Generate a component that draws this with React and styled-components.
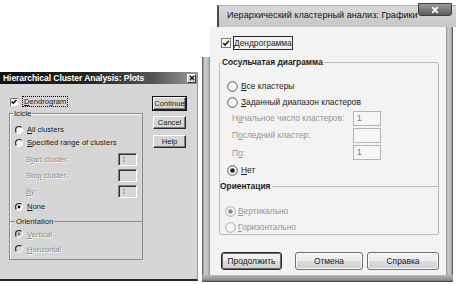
import React from "react";
import styled, { createGlobalStyle } from "styled-components";

const GlobalStyle = createGlobalStyle`
  html, body { margin: 0; padding: 0; background: #fff; }
  body { width: 456px; height: 284px; overflow: hidden; }
  * { box-sizing: border-box; }
`;

const Desktop = styled.div`
  display: flex;
  align-items: flex-start;
  width: 456px;
  height: 284px;
`;

// underline the accelerator letter
function Accel({ text, at = 0 }) {
  return (
    <span>
      {text.slice(0, at)}
      <u>{text[at]}</u>
      {text.slice(at + 1)}
    </span>
  );
}

/* ---------------- classic dialog (left) ---------------- */

const Win2kWindow = styled.div`
  margin-top: 72px;
  width: 198px;
  height: 209px;
  display: flex;
  flex-direction: column;
  background: #d6d6d6;
  border-bottom: 2px solid #262626;
  border-right: 1px solid #9a9a9a;
  font-family: "Liberation Sans", Arial, sans-serif;
  font-size: 7.6px;
  color: #1a1a1a;
`;

const Win2kTitle = styled.div`
  height: 12px;
  display: flex;
  align-items: center;
  padding: 0 1px 0 3px;
  background: linear-gradient(90deg, #0e0e0e 0%, #242424 45%, #555 78%, #9c9c9c 100%);
  color: #fff;
  font-weight: bold;
  font-size: 8.6px;
  letter-spacing: -0.1px;
`;

const Win2kTitleText = styled.div`
  flex: 1;
  white-space: nowrap;
`;

const Win2kClose = styled.div`
  width: 9px;
  height: 9px;
  display: flex;
  align-items: center;
  justify-content: center;
  background: #d6d6d6;
  border-top: 1px solid #fff;
  border-left: 1px solid #fff;
  border-right: 1px solid #303030;
  border-bottom: 1px solid #303030;
`;

const Win2kBody = styled.div`
  flex: 1;
  display: flex;
  padding: 11px 0 0 9px;
`;

const Win2kMain = styled.div`
  width: 134px;
  display: flex;
  flex-direction: column;
`;

const Win2kCheckRow = styled.div`
  height: 13px;
  display: flex;
  align-items: center;
  padding-left: 1px;
  gap: 4px;
`;

const Win2kFocus = styled.span`
  border: 1px dotted #000;
  padding: 0 1px;
  line-height: 9px;
`;

const Win2kGroup = styled.fieldset`
  margin: 1px 0 0 0;
  padding: 0 0 3px 0;
  min-width: 0;
  border: 1px solid #8a8a8a;
  box-shadow: inset 1px 1px 0 #fbfbfb;
  display: flex;
  flex-direction: column;
`;

const Win2kLegend = styled.legend`
  margin-left: 3px;
  padding: 0 1px;
  line-height: 9px;
  background: #d6d6d6;
`;

const Win2kOption = styled.div`
  height: 13px;
  margin-top: ${(p) => p.$top || 0}px;
  display: flex;
  align-items: center;
  gap: 4px;
  padding-left: 5px;
  color: ${(p) => (p.$disabled ? "#8d8d8d" : "#1a1a1a")};
  text-shadow: ${(p) => (p.$disabled ? "1px 1px 0 #fafafa" : "none")};
`;

const Win2kField = styled.div`
  height: 16px;
  margin-top: ${(p) => p.$top || 0}px;
  display: flex;
  align-items: center;
  padding-left: 16px;
  padding-right: 5px;
  color: #8d8d8d;
  text-shadow: 1px 1px 0 #fafafa;
`;

const Win2kInput = styled.div`
  margin-left: auto;
  width: 19px;
  height: 13px;
  padding-left: 3px;
  line-height: 11px;
  background: #d6d6d6;
  border-top: 1px solid #7a7a7a;
  border-left: 1px solid #7a7a7a;
  border-right: 1px solid #fff;
  border-bottom: 1px solid #fff;
  box-shadow: inset 1px 1px 0 #303030;
  color: #8d8d8d;
`;

const Win2kSeparator = styled.div`
  height: 12px;
  margin-top: 2px;
  display: flex;
  align-items: center;
  &::before {
    content: "";
    width: 5px;
    height: 1px;
    background: #8a8a8a;
    margin-right: 1px;
  }
  &::after {
    content: "";
    flex: 1;
    height: 1px;
    background: #8a8a8a;
    margin-left: 1px;
  }
`;

const Win2kButtons = styled.div`
  margin: 2px 0 0 10px;
  display: flex;
  flex-direction: column;
  gap: 6px;
`;

const Win2kButton = styled.div`
  width: 33px;
  height: 13px;
  display: flex;
  align-items: center;
  justify-content: center;
  background: #d6d6d6;
  border-top: 1px solid #fff;
  border-left: 1px solid #fff;
  border-right: 1px solid #2a2a2a;
  border-bottom: 1px solid #2a2a2a;
  box-shadow: ${(p) =>
    p.$default ? "0 0 0 1px #111, inset -1px -1px 0 #7e7e7e" : "inset -1px -1px 0 #7e7e7e"};
`;

function ClassicCheck() {
  return (
    <svg width="8" height="8" viewBox="0 0 8 8">
      <rect x="0" y="0" width="8" height="8" fill="#fff" />
      <path d="M0.5 8 V0.5 H8" fill="none" stroke="#6e6e6e" strokeWidth="1" />
      <path d="M1.6 3.6 L3.2 5.3 L6.5 1.9" fill="none" stroke="#000" strokeWidth="1.4" />
    </svg>
  );
}

function ClassicRadio({ checked, disabled }) {
  return (
    <svg width="8" height="8" viewBox="0 0 8 8">
      <circle cx="4" cy="4" r="3.5" fill={disabled ? "#d6d6d6" : "#f4f4f4"} />
      <path d="M6.5 1.5 A3.5 3.5 0 0 0 1.5 6.5" fill="none" stroke="#333" strokeWidth="1.3" />
      <path d="M1.5 6.5 A3.5 3.5 0 0 0 6.5 1.5" fill="none" stroke="#fff" strokeWidth="1" />
      {checked && <circle cx="4" cy="4" r="1.4" fill={disabled ? "#7a7a7a" : "#000"} />}
    </svg>
  );
}

function CloseX({ size, color, width }) {
  return (
    <svg width={size} height={size} viewBox="0 0 10 10">
      <path d="M1.5 1.5 L8.5 8.5 M8.5 1.5 L1.5 8.5" stroke={color} strokeWidth={width} />
    </svg>
  );
}

function ClassicDialog() {
  return (
    <Win2kWindow>
      <Win2kTitle>
        <Win2kTitleText>Hierarchical Cluster Analysis: Plots</Win2kTitleText>
        <Win2kClose>
          <CloseX size={6} color="#000" width={2} />
        </Win2kClose>
      </Win2kTitle>
      <Win2kBody>
        <Win2kMain>
          <Win2kCheckRow>
            <ClassicCheck />
            <Win2kFocus>
              <Accel text="Dendrogram" />
            </Win2kFocus>
          </Win2kCheckRow>
          <Win2kGroup>
            <Win2kLegend>Icicle</Win2kLegend>
            <Win2kOption $top={5}>
              <ClassicRadio />
              <Accel text="All clusters" />
            </Win2kOption>
            <Win2kOption>
              <ClassicRadio />
              <Accel text="Specified range of clusters" />
            </Win2kOption>
            <Win2kField $top={2}>
              <Accel text="Start cluster:" at={1} />
              <Win2kInput>1</Win2kInput>
            </Win2kField>
            <Win2kField>
              <Accel text="Stop cluster:" at={3} />
              <Win2kInput />
            </Win2kField>
            <Win2kField>
              <Accel text="By:" />
              <Win2kInput>1</Win2kInput>
            </Win2kField>
            <Win2kOption $top={1}>
              <ClassicRadio checked />
              <Accel text="None" />
            </Win2kOption>
            <Win2kSeparator>Orientation</Win2kSeparator>
            <Win2kOption $top={0.5} $disabled>
              <ClassicRadio checked disabled />
              <Accel text="Vertical" />
            </Win2kOption>
            <Win2kOption $top={2} $disabled>
              <ClassicRadio disabled />
              <Accel text="Horizontal" />
            </Win2kOption>
          </Win2kGroup>
        </Win2kMain>
        <Win2kButtons>
          <Win2kButton $default>Continue</Win2kButton>
          <Win2kButton>Cancel</Win2kButton>
          <Win2kButton>Help</Win2kButton>
        </Win2kButtons>
      </Win2kBody>
    </Win2kWindow>
  );
}

/* ---------------- Windows 7 dialog (right) ---------------- */

const AeroWindow = styled.div`
  margin-left: 4px;
  width: 251px;
  height: 282px;
  display: flex;
  flex-direction: column;
  font-family: "Liberation Sans", Arial, sans-serif;
  font-size: 8.4px;
  color: #1c1c1c;
`;

const AeroTitleStrip = styled.div`
  height: 27px;
  display: flex;
  padding: 5px 0 0 15px;
`;

const AeroTitleBar = styled.div`
  flex: 1;
  display: flex;
  align-items: flex-start;
  background: linear-gradient(#dadada, #c6c6c6);
  border-left: 2px solid #4a4a4a;
  border-top: 1px solid #b0b0b0;
`;

const AeroTitleText = styled.div`
  flex: 1;
  padding: 4px 0 0 8px;
  font-size: 9.1px;
  color: #121212;
  white-space: nowrap;
`;

const AeroClose = styled.div`
  width: 34px;
  height: 13px;
  margin: -3px 5px 0 0;
  display: flex;
  align-items: center;
  justify-content: center;
  background: linear-gradient(#9a9a9a, #5c5c5c);
  border: 1px solid #3e3e3e;
  border-radius: 0 0 3px 3px;
`;

const AeroMain = styled.div`
  flex: 1;
  display: flex;
`;

const FrameLeft = styled.div`
  width: 8px;
  margin-top: 30px;
  background: linear-gradient(90deg, #6a6a6a 0, #6a6a6a 1px, #cfcfcf 2px, #bdbdbd 6px, #8c8c8c 8px);
`;

const FrameRight = styled.div`
  width: 7px;
  background: linear-gradient(90deg, #8c8c8c 0, #c9c9c9 2px, #bcbcbc 5px, #4c4c4c 7px);
`;

const FrameBottom = styled.div`
  height: 7px;
  background: linear-gradient(#b8b8b8, #8e8e8e 5px, #3e3e3e 7px);
`;

const AeroContent = styled.div`
  flex: 1;
  display: flex;
  flex-direction: column;
  padding: 9px 7px 0 9px;
  background: #f3f3f3;
`;

const AeroCheckRow = styled.div`
  height: 14px;
  display: flex;
  align-items: center;
  padding-left: 2px;
  gap: 2px;
`;

const AeroFocus = styled.span`
  border: 1px solid #2a2a2a;
  padding: 1px 0;
  line-height: 10px;
`;

const AeroGroup = styled.fieldset`
  margin: 6.5px 0 0 0;
  padding: 0;
  min-width: 0;
  border: 1px solid #bcbcbc;
  border-radius: 2px;
  display: flex;
  flex-direction: column;
`;

const AeroLegend = styled.legend`
  margin-left: 1px;
  padding: 0 1px;
  line-height: 11px;
  font-weight: bold;
`;

const AeroOption = styled.div`
  height: 14px;
  margin-top: ${(p) => p.$top || 0}px;
  display: flex;
  align-items: center;
  gap: ${(p) => p.$gap ?? 3}px;
  padding-left: ${(p) => p.$indent ?? 7}px;
  color: ${(p) => (p.$disabled ? "#959595" : "#1c1c1c")};
`;

const AeroField = styled.div`
  height: 16px;
  margin-top: ${(p) => p.$top || 0}px;
  display: flex;
  align-items: center;
  padding-left: 12px;
  padding-right: 57px;
  color: #959595;
`;

const AeroInput = styled.div`
  margin-left: auto;
  width: 28px;
  height: 15px;
  padding-left: 3px;
  line-height: 13px;
  border: 1px solid #b4b4b4;
  background: #f6f6f6;
  color: #777;
`;

const AeroSeparator = styled.div`
  height: 12px;
  margin-top: 3px;
  display: flex;
  align-items: center;
  font-weight: bold;
  &::after {
    content: "";
    flex: 1;
    height: 1px;
    margin-left: 2px;
    background: #bcbcbc;
  }
`;

const AeroButtonRow = styled.div`
  margin-top: 17px;
  padding-left: 2px;
  display: flex;
`;

const AeroButton = styled.div`
  width: ${(p) => p.$width}px;
  height: 18px;
  margin-left: ${(p) => p.$gap || 0}px;
  display: flex;
  align-items: center;
  justify-content: center;
  border: 1px solid ${(p) => (p.$default ? "#262626" : "#6e6e6e")};
  border-radius: 3px;
  background: linear-gradient(#f4f4f4 0%, #ececec 48%, #dcdcdc 52%, #d0d0d0 100%);
  box-shadow: inset 0 0 0 1px ${(p) => (p.$default ? "#6a6a6a" : "#fbfbfb")};
  color: #1a1a1a;
`;

function AeroCheck() {
  return (
    <svg width="10" height="10" viewBox="0 0 10 10">
      <rect x="0.5" y="0.5" width="9" height="9" fill="#f7f7f7" stroke="#7c7c7c" />
      <path d="M2.2 5 L4.1 7 L7.9 2.8" fill="none" stroke="#1e1e1e" strokeWidth="1.6" />
    </svg>
  );
}

function AeroRadio({ checked, disabled }) {
  return (
    <svg width="11" height="11" viewBox="0 0 11 11">
      <circle cx="5.5" cy="5.5" r="4.8" fill="#f8f8f8" stroke={disabled ? "#a8a8a8" : "#555"} strokeWidth="1" />
      {checked && <circle cx="5.5" cy="5.5" r="2.3" fill={disabled ? "#8a8a8a" : "#222"} />}
    </svg>
  );
}

function AeroDialog() {
  return (
    <AeroWindow>
      <AeroTitleStrip>
        <AeroTitleBar>
          <AeroTitleText>Иерархический кластерный анализ: Графики</AeroTitleText>
          <AeroClose>
            <CloseX size={8} color="#fff" width={2.2} />
          </AeroClose>
        </AeroTitleBar>
      </AeroTitleStrip>
      <AeroMain>
        <FrameLeft />
        <AeroContent>
          <AeroCheckRow>
            <AeroCheck />
            <AeroFocus>
              <Accel text="Дендрограмма" />
            </AeroFocus>
          </AeroCheckRow>
          <AeroGroup>
            <AeroLegend>Сосульчатая диаграмма</AeroLegend>
            <AeroOption $top={11.5}>
              <AeroRadio />
              <Accel text="Все кластеры" />
            </AeroOption>
            <AeroOption $top={2}>
              <AeroRadio />
              <Accel text="Заданный диапазон кластеров" />
            </AeroOption>
            <AeroField $top={1}>
              <Accel text="Начальное число кластеров:" at={1} />
              <AeroInput>1</AeroInput>
            </AeroField>
            <AeroField $top={1}>
              <Accel text="Последний кластер:" at={1} />
              <AeroInput />
            </AeroField>
            <AeroField $top={1.5}>
              <Accel text="По:" at={1} />
              <AeroInput>1</AeroInput>
            </AeroField>
            <AeroOption $top={2.5}>
              <AeroRadio checked />
              <Accel text="Нет" />
            </AeroOption>
            <AeroSeparator>Ориентация</AeroSeparator>
            <AeroOption $top={12} $indent={5} $gap={2} $disabled>
              <AeroRadio checked disabled />
              <Accel text="Вертикально" />
            </AeroOption>
            <AeroOption $top={2} $indent={5} $gap={2} $disabled>
              <AeroRadio disabled />
              <Accel text="Горизонтально" />
            </AeroOption>
          </AeroGroup>
          <AeroButtonRow>
            <AeroButton $width={61} $default>Продолжить</AeroButton>
            <AeroButton $width={68} $gap={13}>Отмена</AeroButton>
            <AeroButton $width={72} $gap={4}>Справка</AeroButton>
          </AeroButtonRow>
        </AeroContent>
        <FrameRight />
      </AeroMain>
      <FrameBottom />
    </AeroWindow>
  );
}

export default function App() {
  return (
    <>
      <GlobalStyle />
      <Desktop>
        <ClassicDialog />
        <AeroDialog />
      </Desktop>
    </>
  );
}
